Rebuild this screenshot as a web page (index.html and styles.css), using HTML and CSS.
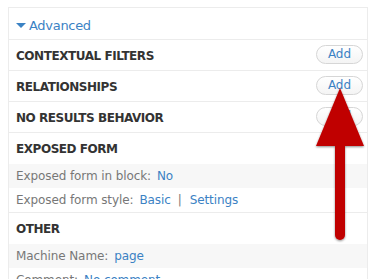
FILE: index.html
```html
<!DOCTYPE html>
<html>
<head>
<meta charset="utf-8">
<link rel="stylesheet" href="styles.css">
</head>
<body>
<div class="panel">
  <div class="summary"><span class="tri"></span><a class="link">Advanced</a></div>
  <div class="row head-row"><span class="title">CONTEXTUAL FILTERS</span><span class="btn">Add</span></div>
  <div class="row head-row"><span class="title">RELATIONSHIPS</span><span class="btn">Add</span></div>
  <div class="row head-row"><span class="title">NO RESULTS BEHAVIOR</span><span class="btn">Add</span></div>
  <div class="section">
    <div class="head-row plain"><span class="title">EXPOSED FORM</span></div>
    <div class="item odd"><span class="label">Exposed form in block:</span><a class="link">No</a></div>
    <div class="item"><span class="label">Exposed form style:</span><a class="link">Basic</a><span class="pipe">|</span><a class="link">Settings</a></div>
  </div>
  <div class="section">
    <div class="head-row plain"><span class="title">OTHER</span></div>
    <div class="item odd"><span class="label">Machine Name:</span><a class="link">page</a></div>
    <div class="item"><span class="label">Comment:</span><a class="link">No comment</a></div>
  </div>
</div>
<svg class="arrow" width="378" height="279" viewBox="0 0 378 279">
  <defs>
    <filter id="sh" x="-50%" y="-20%" width="200%" height="140%">
      <feDropShadow dx="0" dy="1" stdDeviation="1" flood-color="#000" flood-opacity="0.45"/>
    </filter>
  </defs>
  <g filter="url(#sh)" fill="#c00000">
    <polygon points="340,88 364,146 316,146"/>
    <rect x="335" y="140" width="10" height="100" rx="5"/>
  </g>
</svg>
</body>
</html>
```
FILE: styles.css
```css
html, body {
  margin: 0;
  padding: 0;
  background: #fff;
  font-family: "DejaVu Sans", Verdana, sans-serif;
  font-size: 12px;
  overflow: hidden;
}
.panel {
  margin: 7px 0 0 8px;
  width: 358px;
  border: 1px solid #ececec;
  border-bottom: none;
}
.link {
  color: #3b82c4;
  text-decoration: none;
}
.summary {
  height: 31px;
  box-sizing: border-box;
  padding-top: 3px;
  display: flex;
  align-items: center;
  padding-left: 7px;
  font-size: 13px;
  letter-spacing: -0.3px;
}
.tri {
  width: 0;
  height: 0;
  border-left: 5px solid transparent;
  border-right: 5px solid transparent;
  border-top: 5px solid #3b82c4;
  margin-right: 3px;
  margin-top: 1px;
}
.head-row {
  height: 31px;
  display: flex;
  align-items: center;
  justify-content: space-between;
  padding: 0 4px 0 7px;
  box-sizing: border-box;
}
.row {
  border-top: 1px solid #ececec;
}
.section {
  border-top: 1px solid #ececec;
}
.title {
  font-weight: bold;
  color: #333;
  font-size: 12px;
  letter-spacing: -0.45px;
  padding-top: 1px;
}
.btn {
  width: 45px;
  height: 17px;
  border: 1px solid #d6d6d6;
  border-radius: 10px;
  background: linear-gradient(#fff, #f4f4f4);
  color: #3b82c4;
  font-size: 12px;
  display: flex;
  align-items: center;
  justify-content: center;
  margin-top: -2px;
}
.item {
  height: 24px;
  display: flex;
  align-items: center;
  padding-left: 7px;
  color: #777;
  letter-spacing: -0.1px;
}
.item.odd {
  background: #f7f7f7;
}
.label {
  margin-right: 6px;
}
.pipe {
  color: #777;
  margin: 0 8px 0 7px;
}
.arrow {
  position: absolute;
  left: 0;
  top: 0;
  pointer-events: none;
}
```
